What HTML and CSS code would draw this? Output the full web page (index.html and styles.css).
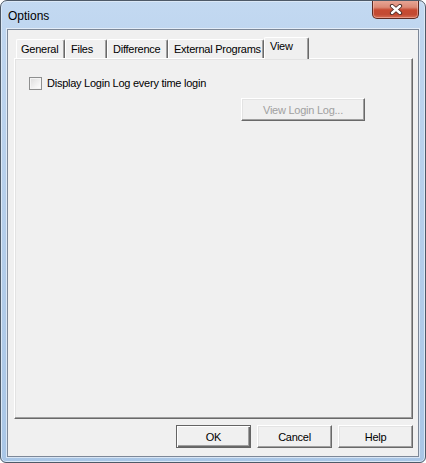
FILE: index.html
```html
<!DOCTYPE html>
<html>
<head>
<meta charset="utf-8">
<link rel="stylesheet" href="styles.css">
</head>
<body>
<div class="window">
  <div class="titlebar">
    <span class="title">Options</span>
    <div class="close">
      <svg width="14" height="11" viewBox="0 0 14 11">
        <path d="M3 2 L11 9 M11 2 L3 9" stroke="#4a2a24" stroke-width="4.2" stroke-linecap="round"/>
        <path d="M3 2 L11 9 M11 2 L3 9" stroke="#ffffff" stroke-width="2.4" stroke-linecap="round"/>
      </svg>
    </div>
  </div>
  <div class="frame">
    <div class="client">
      <div class="tabctl">
        <div class="tabstrip">
          <div class="tab tab-general">General</div>
          <div class="tab tab-files">Files</div>
          <div class="tab tab-diff">Difference</div>
          <div class="tab tab-ext">External Programs</div>
          <div class="tab tab-view selected">View</div>
        </div>
        <div class="panel">
          <label class="check"><span class="box"></span><span>Display Login Log every time login</span></label>
          <div class="viewrow"><button class="btn disabled" disabled>View Login Log...</button></div>
        </div>
      </div>
      <div class="buttons">
        <button class="btn default">OK</button>
        <button class="btn">Cancel</button>
        <button class="btn">Help</button>
      </div>
    </div>
  </div>
</div>
</body>
</html>
```
FILE: styles.css
```css
html, body {
  margin: 0;
  padding: 0;
  background: #ffffff;
}
body {
  font-family: "Liberation Sans", Arial, sans-serif;
  font-size: 11px;
  letter-spacing: -0.25px;
  color: #000;
}
.window {
  width: 426px;
  height: 463px;
  box-sizing: border-box;
  border: 1px solid #4e5a68;
  border-radius: 7px 7px 6px 6px;
  background: linear-gradient(to bottom, #c3d9f1 0px, #bed5ef 40px, #b6cfeb 200px, #a9c6e6 463px);
  box-shadow: inset 0 0 0 1px #dbe8f6;
  display: flex;
  flex-direction: column;
  overflow: hidden;
}
.titlebar {
  height: 28px;
  flex: none;
  display: flex;
  justify-content: space-between;
  align-items: flex-start;
  padding-left: 7px;
}
.title {
  font-size: 12px;
  letter-spacing: 0;
  line-height: 14px;
  margin-top: 8px;
  color: #000;
}
.close {
  width: 47px;
  height: 19px;
  box-sizing: border-box;
  margin-top: -1px;
  margin-right: 6px;
  border: 1px solid #5e2a22;
  border-top: none;
  border-radius: 0 0 5px 5px;
  background: linear-gradient(to bottom, #e9a999 0%, #dc8a76 40%, #c74a32 55%, #c24a33 80%, #d66e55 100%);
  box-shadow: inset 0 0 0 1px rgba(255, 210, 200, 0.45);
  display: flex;
  align-items: center;
  justify-content: center;
}
.close svg {
  display: block;
}
.frame {
  flex: 1;
  padding: 0 6px 5px 6px;
  display: flex;
}
.client {
  flex: 1;
  border: 1px solid #7d8898;
  background: #f0f0f0;
  box-shadow: 0 0 0 1px rgba(255, 255, 255, 0.55);
  display: flex;
  flex-direction: column;
}
.tabctl {
  margin: 7px 5px 0 6px;
  display: flex;
  flex-direction: column;
}
.tabstrip {
  height: 21px;
  display: flex;
  align-items: flex-end;
  padding-left: 2px;
}
.tab {
  box-sizing: border-box;
  height: 19px;
  border-left: 1px solid #ffffff;
  border-top: 1px solid #ffffff;
  border-right: 1px solid #696969;
  box-shadow: inset -1px 0 0 #a0a0a0;
  border-radius: 2px 2px 0 0;
  padding: 3px 0 0 5px;
  line-height: 13px;
  white-space: nowrap;
  overflow: hidden;
  background: #f0f0f0;
}
.tab-general { width: 49px; padding-left: 4px; }
.tab-files { width: 42px; }
.tab-diff { width: 61px; }
.tab-ext { width: 96px; }
.tab-view { width: 45px; }
.tab.selected {
  height: 22px;
  margin-bottom: -1px;
  position: relative;
  z-index: 1;
  padding-top: 2px;
}
.panel {
  height: 361px;
  box-sizing: border-box;
  border-left: 1px solid #ffffff;
  border-top: 1px solid #ffffff;
  border-right: 1px solid #696969;
  border-bottom: 1px solid #696969;
  box-shadow: inset -1px -1px 0 #a0a0a0, inset 1px 1px 0 #e3e3e3;
  display: flex;
  flex-direction: column;
  padding: 18px 0 0 14px;
}
.check {
  display: flex;
  align-items: center;
  height: 13px;
  line-height: 13px;
}
.box {
  width: 13px;
  height: 13px;
  box-sizing: border-box;
  border: 1px solid #8e8f8f;
  background: linear-gradient(135deg, #dcdcdc 0%, #f2f2f2 60%, #ffffff 100%);
  box-shadow: inset 0 0 0 1px #f4f4f4;
  margin-right: 5px;
  flex: none;
}
.viewrow {
  display: flex;
  justify-content: flex-end;
  margin-top: 8px;
  padding-right: 47px;
}
.btn {
  font-family: "Liberation Sans", Arial, sans-serif;
  font-size: 11px;
  letter-spacing: -0.25px;
  color: #000;
  width: 75px;
  height: 23px;
  box-sizing: border-box;
  margin: 0;
  padding: 0;
  background: #f0f0f0;
  border-left: 1px solid #ffffff;
  border-top: 1px solid #ffffff;
  border-right: 1px solid #696969;
  border-bottom: 1px solid #696969;
  box-shadow: inset -1px -1px 0 #a0a0a0, inset 1px 1px 0 #e3e3e3;
  border-radius: 0;
  line-height: 20px;
  text-align: center;
}
.btn.disabled {
  width: 124px;
  color: #a0a0a0;
}
.btn.default {
  border: 1px solid #646464;
  box-shadow: inset 1px 1px 0 #ffffff, inset -1px -1px 0 #696969, inset -2px -2px 0 #a0a0a0;
}
.buttons {
  display: flex;
  justify-content: flex-end;
  gap: 6px;
  margin-top: 6px;
  padding-right: 5px;
}
```
